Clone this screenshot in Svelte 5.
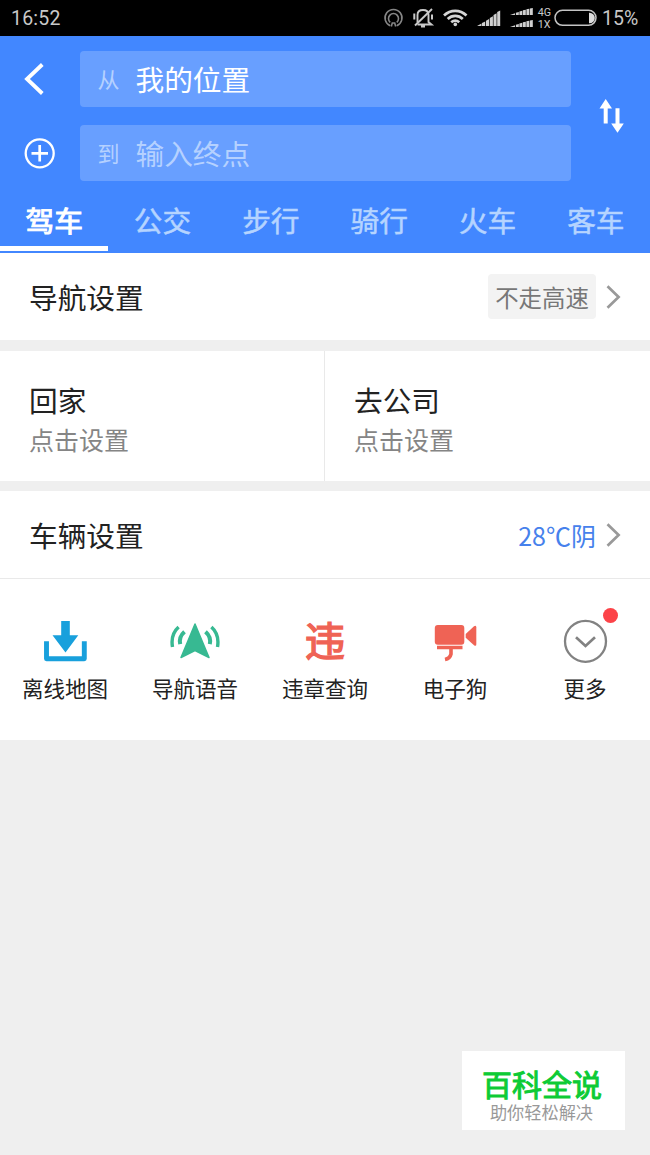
<script>
  const tabs = ['驾车', '公交', '步行', '骑行', '火车', '客车'];
  const places = ['回家', '去公司'];
  const tools = [
    { id: 'map', label: '离线地图' },
    { id: 'voice', label: '导航语音' },
    { id: 'violation', label: '违章查询' },
    { id: 'camera', label: '电子狗' },
    { id: 'more', label: '更多' }
  ];
</script>

{#snippet chevron()}
  <svg class="chevron" width="16" height="26" viewBox="0 0 16 26"><path d="M1.500 2.300 12.600 13 1.500 23.700" fill="none" stroke="#999" stroke-width="2.700" /></svg>
{/snippet}

<main>
  <div class="status">
    <span class="time">16:52</span>
    <svg width="180" height="36" viewBox="380 0 180 36" fill="none">
      <g stroke="#858585" stroke-width="1.600">
        <path d="M390.300 25.800a8.500 8.500 0 1 1 6.400 0" />
        <path d="M390.200 22.300a5 5 0 1 1 6.600 0" />
        <path d="M391.300 26.500l1-3.500h2.400l1 3.500" />
      </g>
      <g stroke="#c9c9c9" stroke-width="1.900">
        <path d="M417.500 22.500V15c0-3 2-5 5.500-5s5.500 2 5.500 5v7l3 2.500h-14M421 26.500h4" />
        <path d="m415 25.500 17-16.500" />
        <path d="M414.300 13.500v6M432 14.500v5" stroke-width="2" />
      </g>
      <g stroke="#d5d5d5" stroke-width="2.700">
        <path d="M444 15.500c6.500-6.300 16-6.300 22.500 0" />
        <path d="M447.700 19c4.400-4.100 10.700-4.100 15.100 0" />
        <path d="M451.200 22.300c2.500-2.100 5.600-2.100 8.100 0" />
      </g>
      <circle cx="455.300" cy="24.400" r="1.800" fill="#d5d5d5" />
      <g fill="#d0d0d0">
        <path d="M477 26l4.500-2.500V26zM482 23l3.200-1.500V26H482zM486 20.700l3.100-1.700v7H486zM489.800 18l3.100-1.700V26h-3.100zM493.500 15l3.100-1.700V26h-3.100zM497.200 12l3-1.500V26h-3z" />
        <path d="M510 15l5-1.800V15zM515.900 12.700l2.900-.7v3h-2.900zM519.400 11.500l2.900-.7V15h-2.900zM522.900 10.300l2.900-.6V15h-2.900zM526.400 9.300l2.900-.6V15h-2.900zM529.900 8.600l2.900-.6v7h-2.900z" />
        <path d="M510 27l5-1.800V27zM515.900 24.700l2.900-.7v3h-2.900zM519.400 23.500l2.900-.7V27h-2.900zM522.900 22.300l2.900-.6V27h-2.900zM526.400 21.300l2.900-.6V27h-2.900zM529.900 20.600l2.900-.6v7h-2.900z" />
      </g>
      <g fill="#c8c8c8" font-family="Roboto, sans-serif" font-size="10.800">
        <text x="537.800" y="16">4G</text>
        <text x="537.800" y="28">1X</text>
      </g>
    </svg>
    <svg width="46" height="18" viewBox="0 0 46 18"><rect x="1" y="1.300" width="41" height="15" rx="7.500" fill="none" stroke="#c4c4c4" stroke-width="1.500" /><path d="M35 3.700h.5a5.300 5.300 0 0 1 0 10.600H35z" fill="#ddd" /></svg>
    <span class="percent">15%</span>
  </div>

  <header>
    <div class="search">
      <div class="side">
        <svg width="32" height="56" viewBox="0 0 32 56"><path d="M18.300 13.500 3 28l15.300 14.500" fill="none" stroke="#fff" stroke-width="3.800" /></svg>
        <svg width="32" height="56" viewBox="0 0 32 56" fill="none" stroke="#fff"><circle cx="15.700" cy="28.300" r="14" stroke-width="2.300" /><path d="M7.500 28.300H24M15.700 20v16.500" stroke-width="2.700" /></svg>
      </div>
      <div class="fields">
        <div class="field"><span class="prefix">从</span><span class="value">我的位置</span></div>
        <div class="field"><span class="prefix">到</span><span class="value empty">输入终点</span></div>
      </div>
      <div class="swap">
        <svg width="26" height="36" viewBox="0 0 26 36" fill="#fff"><path d="M6.700 1 13 10.500H8.700V25.500H4.700V10.500H.5zM16.500 10.200h4V25.500h4.300L18.500 34.800 12.200 25.500h4.300z" /></svg>
      </div>
    </div>
    <nav>
      {#each tabs as tab, i}
        <div class="tab" class:active={i === 0}>{tab}</div>
      {/each}
    </nav>
  </header>

  <section class="row nav-row">
    <span class="title">导航设置</span>
    <span class="chip">不走高速</span>
    {@render chevron()}
  </section>

  <section class="places">
    {#each places as place}
      <div class="place">
        <div class="title">{place}</div>
        <div class="hint">点击设置</div>
      </div>
    {/each}
  </section>

  <section class="row car-row">
    <span class="title">车辆设置</span>
    <span class="weather">28℃阴</span>
    {@render chevron()}
  </section>

  <section class="tools">
    {#each tools as tool}
      <div class="tool">
        <div class="icon">
          {#if tool.id === 'map'}
            <svg width="50" height="50" viewBox="0 0 50 50" fill="#18a0dc"><path d="M21.200 6h8.600v14.200h8.500L25.500 37.500 12.500 20.200h8.700z" /><path d="M6.500 26.300v17.400h37.800V26.300" fill="none" stroke="#18a0dc" stroke-width="4.900" stroke-linejoin="round" /></svg>
          {:else if tool.id === 'voice'}
            <svg width="50" height="50" viewBox="0 0 50 50"><path d="M25 9 39 42.500 25 35.500 11 42.500z" fill="#37b992" stroke="#37b992" stroke-width="1.500" stroke-linejoin="round" /><g fill="none" stroke="#37b992"><path d="M8.600 12C2.500 17.500 1.200 24.500 2.500 32M41.400 12c6.100 5.500 7.400 12.500 6.100 20" stroke-width="3.400" /><path d="M14.500 16.800c-4 3.500-5.300 7.700-4.300 12.400M35.500 16.800c4 3.500 5.300 7.700 4.300 12.400" stroke-width="4" /></g></svg>
          {:else if tool.id === 'violation'}
            <span class="glyph">违</span>
          {:else if tool.id === 'camera'}
            <svg width="50" height="50" viewBox="0 0 50 50" fill="#ef6355"><rect x="4.800" y="10" width="29.500" height="19.800" rx="3" /><path d="M35.700 19 44 11.300q2.300-1.500 2.300 1v17q0 2.500-2.300 1L35.700 22.700z" /><path d="M7 32.500h25.500M21 33.500v5.500q-1 4.500-6 5.500" fill="none" stroke="#ef6355" stroke-width="3.600" /></svg>
          {:else}
            <svg width="50" height="50" viewBox="0 0 50 50" fill="none" stroke="#828282"><circle cx="25.500" cy="26.300" r="20.500" stroke-width="2.300" /><path d="m16 22.300 9.500 8.700 9.500-8.700" stroke-width="2.700" /></svg>
            <i class="dot"></i>
          {/if}
        </div>
        <div class="label">{tool.label}</div>
      </div>
    {/each}
  </section>

  <aside>
    <div class="brand">百科全说</div>
    <div class="slogan">助你轻松解决</div>
  </aside>
</main>

<style>
  :global(body) { margin: 0; background: #efefef; }
  main {
    width: 650px;
    height: 1155px;
    display: flex;
    flex-direction: column;
    background: #efefef;
    color: #222;
    font-family: "Noto Sans CJK SC", sans-serif;
    font-weight: 400;
    overflow: hidden;
  }
  svg { display: block; flex: none; }
  .status {
    height: 36px;
    display: flex;
    align-items: center;
    background: #000;
    color: #c8c8c8;
    padding: 0 11px;
    box-sizing: border-box;
    font: 400 19.500px/36px Roboto, sans-serif;
  }
  .time { width: 369px; letter-spacing: .2px; padding-top: 2px; }
  .status svg:nth-of-type(2) { margin-left: -6px; }
  .percent { margin-left: 2px; padding-top: 2px; font-size: 19.500px; }
  header { height: 217px; background: #4287ff; color: #fff; }
  .search { height: 155px; display: flex; padding: 15px 0 0 24px; box-sizing: border-box; }
  .side, .fields { display: flex; flex-direction: column; gap: 18px; }
  .side { width: 55.500px; }
  .fields { width: 491px; }
  .field {
    height: 56px;
    display: flex;
    align-items: center;
    background: #689fff;
    border-radius: 4px;
    padding-left: 18px;
    box-sizing: border-box;
  }
  .prefix { width: 38px; font-size: 22px; line-height: 30px; padding-bottom: 2px; color: #b5d1ff; }
  .value { font-size: 28.700px; line-height: 40px; }
  .value.empty { color: #b5d1ff; }
  .swap { padding: 47px 0 0 28px; }
  nav { height: 62px; display: grid; grid-template-columns: repeat(6, 1fr); }
  .tab {
    height: 60px;
    box-sizing: border-box;
    border-bottom: 5px solid transparent;
    text-align: center;
    font-size: 28.700px;
    line-height: 58px;
    color: #b5d4ff;
    -webkit-text-stroke: .5px currentColor;
  }
  .tab.active { color: #fff; border-color: #fff; -webkit-text-stroke-width: 1px; }
  .row { display: flex; align-items: center; background: #fff; padding: 0 28px 0 29px; }
  .nav-row { height: 87px; }
  .car-row { height: 87px; border-bottom: 1px solid #e9e9e9; }
  .title { font-size: 28.700px; line-height: 40px; }
  .row .title { flex: 1; }
  .chip {
    width: 108px;
    height: 45px;
    border-radius: 4px;
    background: #f3f3f3;
    color: #777;
    text-align: center;
    font-size: 23.400px;
    line-height: 46px;
  }
  .chevron { margin-left: 10px; }
  .weather { color: #4681ec; font-size: 25px; line-height: 36px; }
  .places { height: 130px; margin: 10.500px 0; display: grid; grid-template-columns: 1fr 1fr; background: #fff; }
  .place { padding: 29px 0 0 29px; }
  .place:first-child { border-right: 1px solid #e9e9e9; }
  .hint { color: #858585; font-size: 25px; line-height: 38px; }
  .tools { height: 161px; display: grid; grid-template-columns: repeat(5, 1fr); background: #fff; }
  .tool { padding-top: 36px; text-align: center; }
  .icon { width: 50px; height: 50px; margin: 0 auto; position: relative; }
  .glyph { display: block; color: #ef6355; font-size: 40px; line-height: 49px; -webkit-text-stroke: 1.500px currentColor; }
  .dot { position: absolute; left: 43px; top: -7px; width: 15px; height: 15px; border-radius: 50%; background: #fc4348; }
  .label { font-size: 21.500px; line-height: 32px; margin-top: 7px; white-space: nowrap; }
  aside {
    width: 163px;
    height: 79px;
    margin: auto 25px 25px auto;
    padding-top: 16px;
    box-sizing: border-box;
    background: #fff;
    text-align: center;
    white-space: nowrap;
  }
  .brand { color: #0dcb35; font-size: 30px; line-height: 32px; margin-left: -3px; -webkit-text-stroke: 1px currentColor; }
  .slogan { color: #999; font-size: 17.200px; line-height: 18px; margin: 4px 0 0 -4px; }
</style>
